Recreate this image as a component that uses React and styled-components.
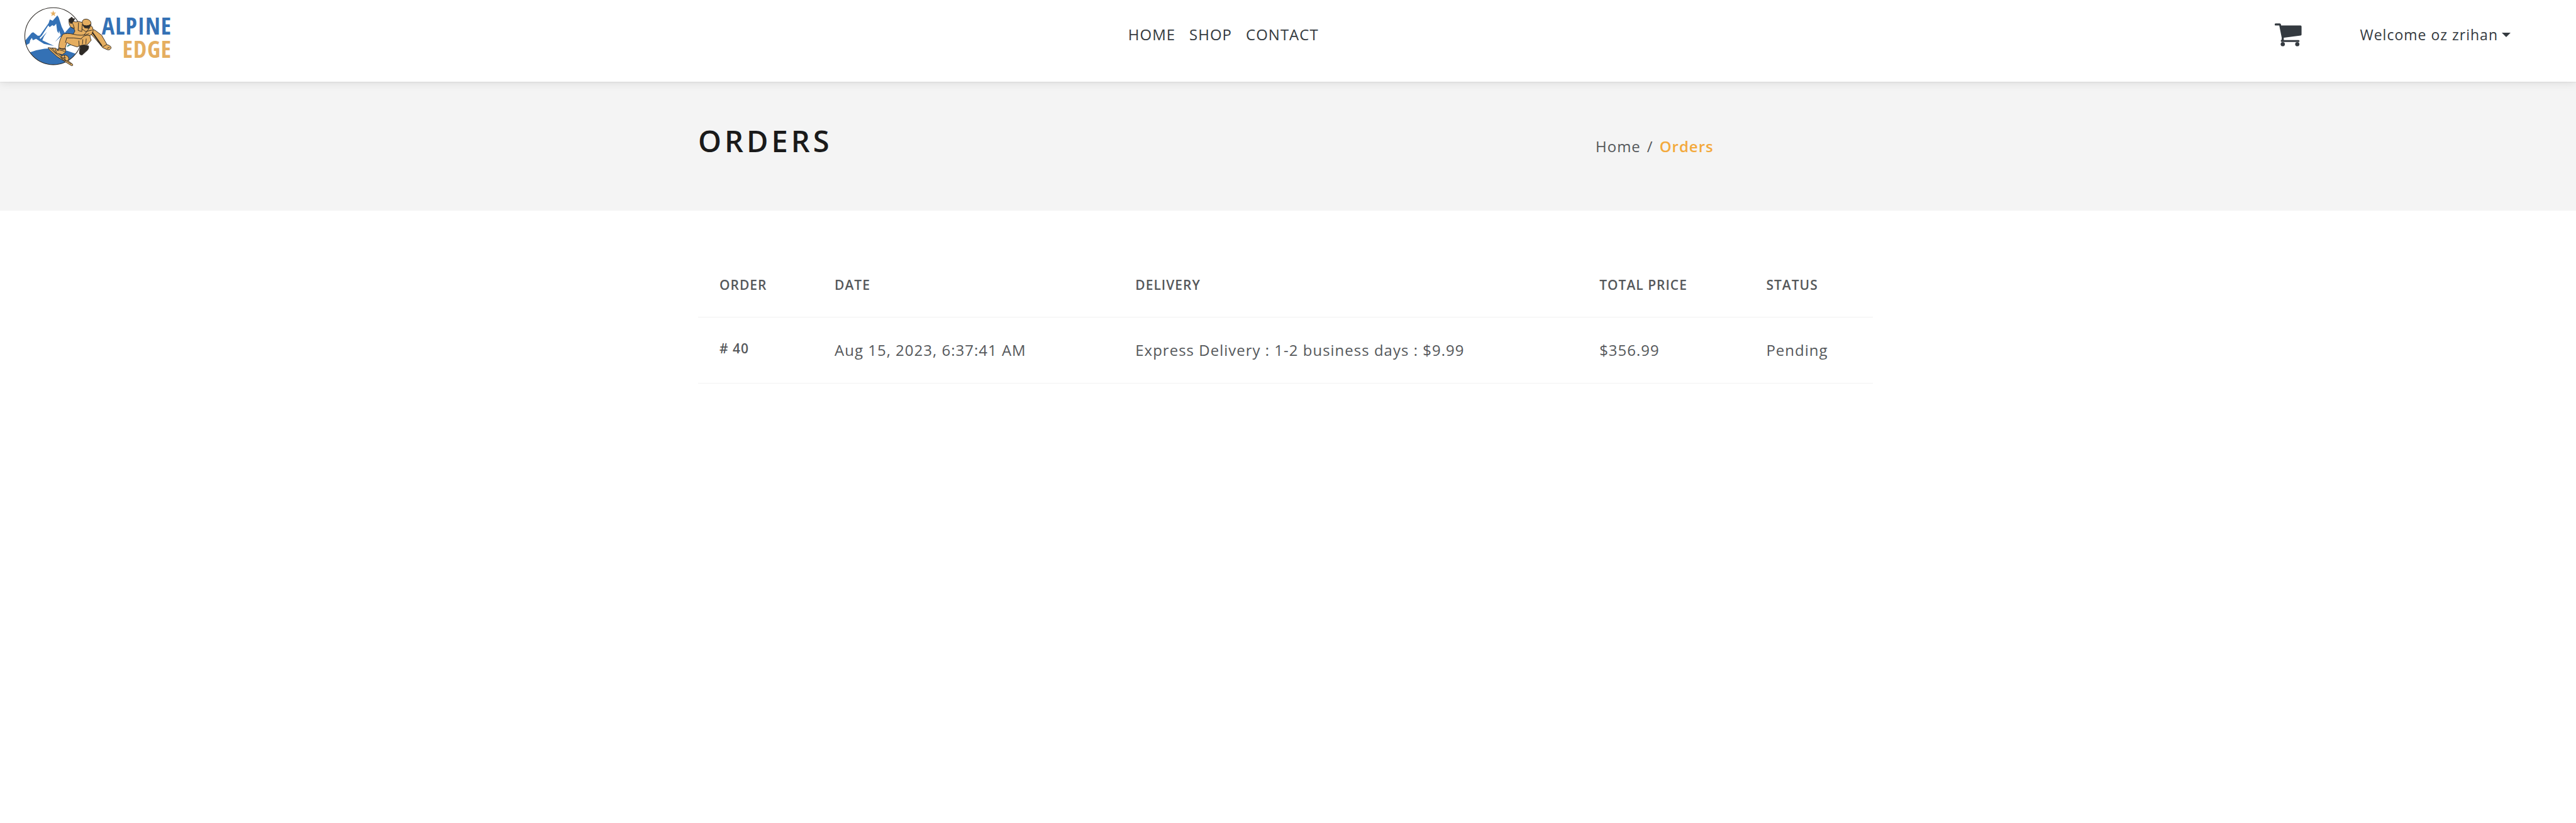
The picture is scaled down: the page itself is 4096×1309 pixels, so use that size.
import React from "react";
import styled, { createGlobalStyle } from "styled-components";

const color = {
  ink: "#343a40",
  text: "#55585b",
  title: "#1a1a1a",
  accent: "#f3a93c",
  band: "#f4f4f4",
  line: "#f1f1f1",
  logoBlue: "#3471b5",
  logoSand: "#e5ae60",
  logoLine: "#2e2a26",
};

const GlobalStyle = createGlobalStyle`
  *, *::before, *::after { box-sizing: border-box; }
  body {
    margin: 0;
    background: #fff;
    color: ${color.text};
    font-family: "Open Sans", "Noto Sans", sans-serif;
    font-size: 24px;
    line-height: 28px;
    letter-spacing: 1px;
  }
  a { color: inherit; text-decoration: none; }
`;

const Header = styled.header`
  position: relative;
  display: flex;
  align-items: center;
  justify-content: space-between;
  min-height: 130px;
  padding: 0 104px 20px 36px;
  background: #fff;
  color: ${color.ink};
  box-shadow: 0 1px 2px rgba(0, 0, 0, 0.06), 0 2px 14px rgba(0, 0, 0, 0.1);
`;

const Brand = styled.a`
  display: flex;
  align-items: flex-start;
  width: 237px;
  padding-top: 6px;
`;

const BrandMark = styled.svg`
  flex: none;
  width: 144px;
  height: 99px;
`;

const BrandName = styled.span`
  flex: 1;
  display: flex;
  flex-direction: column;
  align-items: flex-end;
  padding-top: 13px;
  margin-left: -24px;
  font-family: "Open Sans Condensed", "Roboto Condensed", sans-serif;
  font-size: 38px;
  font-weight: 700;
  line-height: 37px;
`;

const BrandWord = styled.span`
  color: ${(p) => p.$tone};
`;

const Nav = styled.nav`
  display: flex;
  gap: 22px;
`;

const NavLink = styled.a`
  text-transform: uppercase;
`;

const Actions = styled.div`
  display: flex;
  align-items: center;
  gap: 92px;
`;

const CartLink = styled.a`
  display: flex;
`;

const CartGlyph = styled.svg`
  width: 43px;
  height: 37px;
  fill: ${color.ink};
`;

const UserMenu = styled.button`
  display: flex;
  align-items: center;
  gap: 6px;
  padding: 0;
  border: 0;
  background: none;
  color: inherit;
  font: inherit;
  font-size: 23px;
  letter-spacing: inherit;
  cursor: pointer;

  &::after {
    content: "";
    border-top: 7px solid;
    border-left: 7px solid transparent;
    border-right: 7px solid transparent;
  }
`;

const Band = styled.section`
  padding: 66px 8px 83px 0;
  background: ${color.band};
`;

const Container = styled.div`
  width: 100%;
  max-width: 1868px;
  margin: 0 auto;
`;

const BandRow = styled(Container)`
  display: grid;
  grid-template-columns: 1fr 441px;
  align-items: baseline;
`;

const Title = styled.h1`
  margin: 0;
  color: ${color.title};
  font-size: 47px;
  font-weight: 600;
  line-height: 56px;
  letter-spacing: 5px;
  text-transform: uppercase;
`;

const Crumbs = styled.ol`
  display: flex;
  gap: 10px;
  margin: 0;
  padding: 0;
  list-style: none;
`;

const Crumb = styled.li`
  color: ${(p) => (p.$current ? color.accent : "inherit")};
  font-weight: ${(p) => (p.$current ? 600 : 400)};
`;

const Main = styled.main`
  padding: 64px 8px 64px 0;
`;

const Table = styled.table`
  width: 100%;
  table-layout: fixed;
  border-collapse: separate;
  border-spacing: 0;
  text-align: left;
`;

const Col = styled.col`
  width: ${(p) => p.$share}%;
`;

const HeadCell = styled.th`
  padding: 40px 34px 37px;
  border-bottom: 1px solid ${color.line};
  font-size: 21px;
  font-weight: 600;
  text-transform: uppercase;
`;

const RowHead = styled.th`
  padding: 39px 34px 37px;
  border-bottom: 1px solid ${color.line};
  font-size: 21px;
  font-weight: 600;
  line-height: 20px;
  vertical-align: top;
`;

const Cell = styled.td`
  padding: 38px 34px;
  border-bottom: 1px solid ${color.line};
`;

const links = ["Home", "Shop", "Contact"];

const columns = [
  { label: "Order", share: 9.8 },
  { label: "Date", share: 25.6 },
  { label: "Delivery", share: 39.5 },
  { label: "Total Price", share: 14.2 },
  { label: "Status", share: 10.9 },
];

const orders = [
  {
    id: 40,
    date: "Aug 15, 2023, 6:37:41 AM",
    delivery: "Express Delivery : 1-2 business days : $9.99",
    total: "$356.99",
    status: "Pending",
  },
];

function Snowboarder() {
  return (
    <BrandMark viewBox="135 30 540 371" aria-hidden="true">
      <clipPath id="disc">
        <circle cx="318" cy="212" r="170" />
      </clipPath>
      <g clipPath="url(#disc)">
        <g fill={color.logoBlue}>
          <path d="M140 250 L188 193 L198 188 L226 210 L238 208 L290 134 L297 112 L314 120 L342 88 L350 100 L368 156 L386 192 L430 142 L470 175 L440 205 L360 216 L328 246 L362 206 L352 178 L350 196 L341 182 L335 138 L322 152 L312 146 L296 158 L288 148 L250 208 L236 222 L244 232 L322 270 L262 258 L215 228 L196 236 L190 222 L180 236 L176 254 L140 276 Z" />
          <path d="M280 186 L232 238 L248 246 L262 214 Z" />
          <path d="M135 330 Q210 286 310 284 Q400 288 500 340 L480 400 L150 400 Z" />
        </g>
        <path d="M404 262 L432 260 L398 278 Z" fill="#4d8c8d" />
        <path d="M317 58 L322 71 L335 71 L325 79 L329 93 L317 85 L306 93 L310 79 L300 71 L313 71 Z" fill={color.logoSand} />
      </g>
      <circle cx="318" cy="212" r="170" fill="none" stroke={color.logoLine} strokeWidth="4" />
      <g fill={color.logoSand} stroke={color.logoLine} strokeWidth="3.5" strokeLinejoin="round" strokeLinecap="round">
        <path d="M288 280 L318 284 L352 318 L432 378 Q438 390 426 388 L340 334 L296 294 Z" />
        <path d="M312 282 L334 284 L346 300 L348 284 L392 288 L390 308 L372 322 L344 316 L330 308 Z" />
        <path d="M362 336 Q384 314 404 332 Q418 350 400 360 L380 356 Z" />
        <path d="M482 262 L528 270 Q532 290 512 304 L490 324 Q470 326 474 302 Z" fill={color.logoLine} />
        <path d="M546 170 L566 176 L606 206 L638 262 Q666 270 662 284 Q654 298 638 292 L612 280 Q570 228 542 200 Z" />
        <path d="M414 130 L410 112 L428 98 L436 108 L446 108 L436 126 L424 138 Z" fill={color.logoLine} />
        <path d="M412 124 L424 138 L438 124 Q452 130 468 124 L490 130 L546 152 Q560 166 552 196 L536 208 Q538 224 544 236 L522 262 L486 266 L460 276 Q420 266 398 250 L388 286 Q366 290 350 280 Q352 232 376 200 Q400 192 436 200 L446 184 Q448 168 426 160 Q410 148 412 124 Z" />
        <path d="M490 130 Q490 108 518 110 Q548 118 542 146 L530 166 L506 162 Z" />
        <path d="M490 142 Q514 158 540 142 L530 162 L506 160 Z" fill={color.logoLine} />
        <g fill="none">
          <path d="M398 222 Q440 220 484 228 M484 228 Q500 200 536 208 M398 222 L390 250 M470 240 L472 270 M436 200 Q486 214 530 198" />
          <path d="M430 130 Q438 144 444 166 L426 160 M468 132 L466 178 L488 184 L490 148 M488 168 L510 184 L548 176 M536 158 Q520 184 500 206" />
          <path d="M352 282 Q370 296 390 288 M350 292 L384 302 M330 290 L336 308 M302 286 L324 308 M366 342 L390 340 M384 326 L388 354 M494 232 L492 258 M514 228 L512 256" />
          <path d="M552 192 L606 268" strokeWidth="8" />
          <path d="M326 310 L424 378 M612 276 L636 262 M640 284 L652 278" />
        </g>
      </g>
    </BrandMark>
  );
}

function CartIcon() {
  return (
    <CartGlyph viewBox="0 0 54 46" aria-hidden="true">
      <path d="M2 0 H10 Q12 0 12.3 2 L12.7 4.3 H51.5 Q53.5 4.3 53.5 6.3 V22.3 Q53.5 24 51.8 24.3 L18 28.5 L18 33.3 H47.5 A1.7 1.7 0 0 1 47.5 37.2 H14 Q12 37.2 12 35 Q12 33.5 13.8 32.5 L14 29 L9 4.3 H2 A2.1 2.1 0 0 1 2 0 Z" />
      <circle cx="16" cy="41.5" r="4.2" />
      <circle cx="45" cy="41.5" r="4.2" />
    </CartGlyph>
  );
}

export default function App() {
  return (
    <>
      <GlobalStyle />
      <Header>
        <Brand href="#home" aria-label="Alpine Edge">
          <Snowboarder />
          <BrandName>
            <BrandWord $tone={color.logoBlue}>ALPINE</BrandWord>
            <BrandWord $tone={color.logoSand}>EDGE</BrandWord>
          </BrandName>
        </Brand>
        <Nav>
          {links.map((label) => (
            <NavLink key={label} href={`#${label.toLowerCase()}`}>
              {label}
            </NavLink>
          ))}
        </Nav>
        <Actions>
          <CartLink href="#cart" aria-label="Cart">
            <CartIcon />
          </CartLink>
          <UserMenu type="button" aria-haspopup="menu">
            Welcome oz zrihan
          </UserMenu>
        </Actions>
      </Header>

      <Band>
        <BandRow>
          <Title>Orders</Title>
          <Crumbs>
            <Crumb>
              <a href="#home">Home</a>
            </Crumb>
            <Crumb aria-hidden="true">/</Crumb>
            <Crumb $current aria-current="page">
              Orders
            </Crumb>
          </Crumbs>
        </BandRow>
      </Band>

      <Main>
        <Container>
          <Table>
            <colgroup>
              {columns.map((c) => (
                <Col key={c.label} $share={c.share} />
              ))}
            </colgroup>
            <thead>
              <tr>
                {columns.map((c) => (
                  <HeadCell key={c.label} scope="col">
                    {c.label}
                  </HeadCell>
                ))}
              </tr>
            </thead>
            <tbody>
              {orders.map((o) => (
                <tr key={o.id}>
                  <RowHead scope="row"># {o.id}</RowHead>
                  <Cell>{o.date}</Cell>
                  <Cell>{o.delivery}</Cell>
                  <Cell>{o.total}</Cell>
                  <Cell>{o.status}</Cell>
                </tr>
              ))}
            </tbody>
          </Table>
        </Container>
      </Main>
    </>
  );
}
